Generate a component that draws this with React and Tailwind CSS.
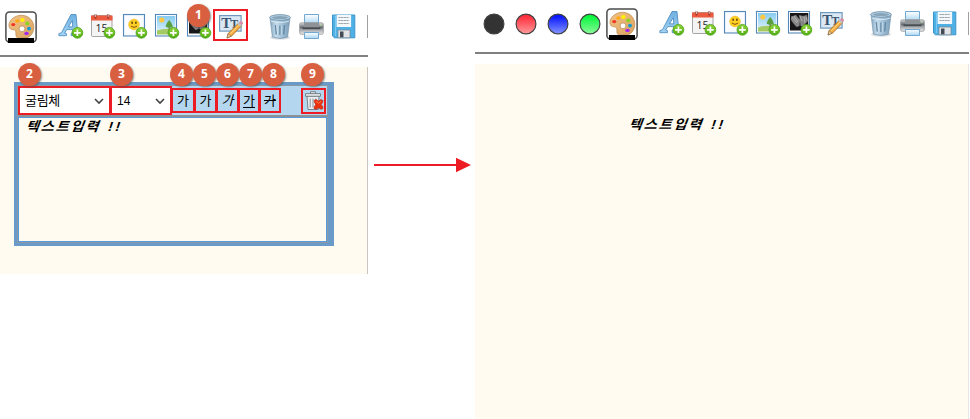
import React from "react";

const KR = "font-['Liberation_Sans','Noto_Sans_CJK_KR',sans-serif]";

function Cell({ children, className = "" }) {
  return (
    <svg viewBox="0 0 32 32" className={`block h-8 w-8 shrink-0 ${className}`} fill="none">
      {children}
    </svg>
  );
}

function Defs() {
  return (
    <svg className="absolute h-0 w-0">
      <defs>
        <linearGradient id="plus" x1="0" y1="0" x2="0" y2="1">
          <stop offset="0" stopColor="#8fd438" /><stop offset="1" stopColor="#4fae10" />
        </linearGradient>
        <linearGradient id="wood" x1="0" y1="0" x2="1" y2="1">
          <stop offset="0" stopColor="#f2c387" /><stop offset="1" stopColor="#d9a360" />
        </linearGradient>
        <linearGradient id="sky" x1="0" y1="0" x2="0" y2="1">
          <stop offset="0" stopColor="#86cbf1" /><stop offset="1" stopColor="#e6f6fc" />
        </linearGradient>
        <linearGradient id="letter" x1="0" y1="0" x2="0" y2="1">
          <stop offset="0" stopColor="#6fb0e0" /><stop offset="1" stopColor="#a5d5f4" />
        </linearGradient>
        <linearGradient id="can" x1="0" y1="0" x2="1" y2="0">
          <stop offset="0" stopColor="#86a8c2" /><stop offset=".3" stopColor="#c5dcec" />
          <stop offset=".65" stopColor="#9bbcd4" /><stop offset="1" stopColor="#7c9db7" />
        </linearGradient>
        <linearGradient id="metal" x1="0" y1="0" x2="0" y2="1">
          <stop offset="0" stopColor="#d7d9dc" /><stop offset=".4" stopColor="#686d72" />
          <stop offset=".6" stopColor="#a4a8ac" /><stop offset="1" stopColor="#e7e8e9" />
        </linearGradient>
        <linearGradient id="sheet" x1="0" y1="0" x2="0" y2="1">
          <stop offset="0" stopColor="#fff" /><stop offset="1" stopColor="#a9d6f4" />
        </linearGradient>
        <linearGradient id="dotred" x1="0" y1="0" x2="0" y2="1">
          <stop offset=".1" stopColor="#ff2c3c" /><stop offset="1" stopColor="#ff9b9b" />
        </linearGradient>
        <linearGradient id="dotblue" x1="0" y1="0" x2="0" y2="1">
          <stop offset=".1" stopColor="#0715ff" /><stop offset="1" stopColor="#8596ff" />
        </linearGradient>
        <linearGradient id="dotgreen" x1="0" y1="0" x2="0" y2="1">
          <stop offset=".1" stopColor="#06f83c" /><stop offset="1" stopColor="#8cf99b" />
        </linearGradient>
      </defs>
    </svg>
  );
}

function Plus() {
  return (
    <g>
      <circle cx="22.4" cy="21.8" r="5.4" fill="url(#plus)" stroke="#4da11b" strokeWidth=".8" />
      <path d="M22.400 18.500v6.600M19.100 21.800h6.600" stroke="#fff" strokeWidth="1.700" />
    </g>
  );
}

function Palette() {
  return (
    <Cell>
      <rect x=".9" y=".9" width="30.2" height="30.2" rx="3.5" fill="#fff" stroke="#4b4b4b" strokeWidth="1.5" />
      <path d="M14 4.500c7.600-1.300 14.500 3.600 14.800 11.200.2 6.200-3.700 11-8.200 11.200-3.500.2-6.200 0-8.600-.4-1.600-.9-.8-4.700-1.400-6.400-.7-1.900-3.800-.8-5.400-2.300C1.500 13.600 6.200 5.800 14 4.500z" fill="url(#wood)" stroke="#bd894c" strokeWidth=".7" />
      <circle cx="17" cy="17.800" r="2.900" fill="#fff" stroke="#bb9362" strokeWidth=".8" />
      <ellipse cx="8.200" cy="13.600" rx="2.100" ry="1.700" fill="#f03824" />
      <ellipse cx="12.300" cy="10" rx="2.200" ry="1.800" fill="#ffa916" />
      <ellipse cx="17.400" cy="9" rx="2.200" ry="1.900" fill="#fff200" />
      <ellipse cx="22.300" cy="12.400" rx="2.100" ry="1.900" fill="#8dd41e" />
      <ellipse cx="24" cy="17.600" rx="2" ry="1.900" fill="#149ad1" />
      <ellipse cx="21.500" cy="22.400" rx="2.200" ry="1.700" fill="#a426f0" />
      <path d="M3 27h26v5H3z" fill="#000" />
    </Cell>
  );
}

function FontIcon() {
  return (
    <Cell>
      <path d="M16 3.500h5l1.700 18 2 .8v2.400h-8.500v-2.400l1.800-.6-.2-3.100h-6l-2.200 3.400 1.800.6v2.100H3.900v-2.100l2.600-.9zM17.400 9.500l-4 6.300h4.300z" fill="url(#letter)" stroke="#4385bd" strokeWidth=".8" />
      <Plus />
    </Cell>
  );
}

function CalendarIcon() {
  return (
    <Cell>
      <rect x="4.500" y="4.500" width="20.500" height="21" rx="1.200" fill="#f4f4f4" stroke="#a5a5a5" />
      <path d="M4 4.500h21.500v5H4z" fill="#ec5a40" />
      <path d="M8.500 3v4.500M21.300 3v4.500" stroke="#9c3428" strokeWidth="1.800" />
      <path d="M8.500 3v3M21.300 3v3" stroke="#ddd" strokeWidth=".8" />
      <text x="8.500" y="20.600" fontSize="10.500" fill="#222" className="font-['Open_Sans',sans-serif]">15</text>
      <Plus />
    </Cell>
  );
}

function Frame({ fill = "#eef6fd" }) {
  return <rect x="4.500" y="3.500" width="21" height="21.500" fill={fill} stroke="#5488b8" strokeWidth="1.100" />;
}

function SmileIcon() {
  return (
    <Cell>
      <Frame />
      <rect x="6" y="5" width="18" height="18.500" fill="#fafcff" />
      <circle cx="15" cy="13.500" r="5.400" fill="#ffcf26" stroke="#e9b41c" strokeWidth=".5" />
      <ellipse cx="13.100" cy="11.800" rx=".8" ry="1.300" fill="#573909" />
      <ellipse cx="16.900" cy="11.800" rx=".8" ry="1.300" fill="#573909" />
      <path d="M11.900 15.100q3.100 2.600 6.200 0" stroke="#805411" strokeWidth="1" />
      <Plus />
    </Cell>
  );
}

function PictureIcon() {
  return (
    <Cell>
      <Frame fill="#fff" />
      <rect x="6" y="5" width="18.300" height="18.500" fill="url(#sky)" />
      <circle cx="10.800" cy="9" r="2.600" fill="#ffc844" />
      <path d="M6 19.500q8-3 18.300-1v5H6z" fill="#a5ca63" />
      <path d="M18.200 13v7" stroke="#7d6539" strokeWidth="1.200" />
      <path d="M18.200 9q-2.500 2.500-3.700 6.500 3.700 2.500 7.400 0-1.200-4-3.700-6.500z" fill="#599f3f" />
      <Plus />
    </Cell>
  );
}

function NightIcon() {
  return (
    <Cell>
      <Frame fill="#fff" />
      <rect x="6" y="5" width="18.300" height="17.500" fill="#171719" />
      <path d="m7 8.500 5-1.500 4 5-.5 6-3 1-3.500-4-2-3zm8-1.500 4 1 4-1 1 6-3 3-1.500 3-3-1-.5-5z" fill="#858585" />
      <path d="m8 9 5 6m-3-7 4 6m2-6 2 5m2-4 1 6m1-6 .6 3" stroke="#d0d0d0" strokeWidth=".6" />
      <Plus />
    </Cell>
  );
}

function TextIcon() {
  return (
    <Cell>
      <rect x="4.600" y="4.600" width="21.500" height="15.500" fill="#dbe8f3" stroke="#6f99bd" strokeWidth="1.200" />
      <text x="6.300" y="17" fontSize="15" fontWeight="700" fill="#38546f" className="font-['Liberation_Serif',serif]">T</text>
      <text x="15.500" y="17" fontSize="11.500" fontWeight="700" fill="#38546f" className="font-['Liberation_Serif',serif]">T</text>
      <path d="m12 27 1.200-4.500L23.600 12l3.100 2.600L16.500 25.200z" fill="#f8ad42" stroke="#9d6a2c" strokeWidth=".8" />
      <path d="m14.800 23.400 10-10" stroke="#ffda83" strokeWidth="1" />
      <path d="m12 27 1.200-4.200 3 2.400z" fill="#efd2a8" stroke="#74512d" strokeWidth=".5" />
      <path d="m22.600 13 1.300-1.400 2.900 2.700-1.300 1.300z" fill="#bec4c8" />
      <path d="m24 11.500 1.200-1.200q1-.5 2 .4t.8 2L26.800 14z" fill="#dc8aa6" />
    </Cell>
  );
}

function TrashIcon() {
  return (
    <Cell>
      <ellipse cx="16" cy="26.500" rx="10" ry="2" fill="#bcc3c8" opacity=".6" />
      <path d="M6 6.500 8.400 26q7.600 3 15.200 0L26 6.500z" fill="url(#can)" stroke="#7796ae" strokeWidth=".7" />
      <ellipse cx="16" cy="6.500" rx="10.400" ry="2.800" fill="#b8d2e4" stroke="#7799b3" />
      <ellipse cx="16" cy="6.600" rx="8.200" ry="1.500" fill="#88a4b9" />
      <path d="M6.800 10q9.200 3.300 18.400 0" stroke="#dceaf3" strokeWidth=".9" />
      <path d="m11.500 14 .8 9.500M16 14.500V24m4.500-10-.8 9.500" stroke="#668aa7" strokeWidth="1.500" />
      <path d="m12.700 14 .8 9.500M17.200 14.500V24" stroke="#d6e7f2" strokeWidth=".7" />
    </Cell>
  );
}

function PrinterIcon() {
  return (
    <Cell>
      <path d="M8.500 3.500h14V13h-14z" fill="url(#sheet)" stroke="#72a9d3" />
      <rect x="3.600" y="11.800" width="23.800" height="11.500" rx="1.700" fill="url(#metal)" stroke="#9a9da0" strokeWidth=".8" />
      <path d="M8 11.500h15v5H8z" fill="#8e9397" />
      <path d="M6.500 17.300h18" stroke="#484d51" strokeWidth="1.800" />
      <path d="M8.500 21.500h14v6h-14z" fill="url(#sheet)" stroke="#72a9d3" />
      <path d="M23.800 14h2" stroke="#bce89c" />
    </Cell>
  );
}

function SaveIcon() {
  return (
    <Cell>
      <path d="M4.500 4h22.300v22.800H6.500l-2-1.800z" fill="#4fb0e6" stroke="#3b94c8" />
      <path d="M5.500 5h2v20" stroke="#8bcff2" strokeWidth=".8" />
      <rect x="8.600" y="4" width="14.500" height="12" fill="#f4f8fa" />
      <path d="M10.500 6.500h10.700M10.500 9.500h10.700M10.500 12.500h10.700" stroke="#8f9aa2" strokeWidth=".9" strokeDasharray="2.200 .4" />
      <path d="M10 19h12v7.800H10z" fill="#e1e5e8" stroke="#72828d" strokeWidth=".7" />
      <path d="M12 20.500h3.500v5.800H12z" fill="#434c54" />
    </Cell>
  );
}

function Badge({ n, className }) {
  return (
    <span className={`absolute z-10 flex h-[23px] w-[23px] items-center justify-center rounded-full bg-[#d95f41] pb-px font-['Open_Sans',sans-serif] text-[12px] font-bold leading-none text-white shadow-[1px_1px_2px_rgba(80,80,80,0.65)] ${className}`}>
      {n}
    </span>
  );
}

function Tools({ marked }) {
  return (
    <>
      <Palette />
      <div className="ml-[18px] flex">
        <FontIcon />
        <CalendarIcon />
        <SmileIcon />
        <PictureIcon />
        <div className="relative">
          <NightIcon />
          {marked && <Badge n={1} className="left-1 -top-[7px]" />}
        </div>
        <div className={marked ? "h-7 w-[31px] outline-2 outline-[#ed1c24]" : "w-8"}>
          <TextIcon />
        </div>
      </div>
      <div className={marked ? "ml-[18px] flex" : "ml-[17px] flex"}>
        <TrashIcon />
        <PrinterIcon />
        <SaveIcon />
      </div>
      <div className="ml-[7px] mt-1 h-[23px] w-px shrink-0 bg-[#a0a0a0]" />
    </>
  );
}

function ColorDot({ fill }) {
  return (
    <Cell>
      <circle cx="16" cy="16" r="9.900" fill={fill} stroke="#414141" strokeWidth="1.200" />
    </Cell>
  );
}

function Select({ n, label, className, textClass, badge }) {
  return (
    <div className={`relative flex h-[29px] items-center justify-between border-2 border-[#ed1c24] bg-white pl-[5px] pr-[5px] text-black ${className}`}>
      <span className={`${KR} leading-none ${textClass}`}>{label}</span>
      <svg viewBox="0 0 10 8" className="h-2 w-2.5" fill="none">
        <path d="m1 2 4 4 4-4" stroke="#444" strokeWidth="1.600" />
      </svg>
      <Badge n={n} className={badge} />
    </div>
  );
}

function StyleButton({ n, className, textClass, badge }) {
  return (
    <div className={`relative mt-0.5 flex h-[25px] items-center justify-center border-2 border-[#ed1c24] ${className}`}>
      <span className={`${KR} text-[13px] leading-none text-black ${textClass}`}>가</span>
      <Badge n={n} className={badge} />
    </div>
  );
}

function SampleText() {
  return (
    <div className={`${KR} -ml-px flex origin-left scale-x-[1.09] -skew-x-6 gap-[7px] whitespace-pre text-[13px] font-bold italic leading-4 tracking-[1.700px] text-black`}>
      <span>텍스트입력</span>
      <span className="tracking-[2.500px]">!!</span>
    </div>
  );
}

function TextEditor() {
  return (
    <div className="h-[164px] w-[320px] bg-[#6a9ac7] pl-[3px] pt-[3px]">
      <div className="h-[158px] w-[311px] border border-[#8b98a5]">
        <div className="flex h-[29px] bg-[#b4d7ef]">
          <Select n={2} label="굴림체" textClass="text-[13px] tracking-[-0.3px]" className="w-[93px]" badge="left-[-2px] top-[-25px]" />
          <Select n={3} label="14" textClass="text-[12px]" className="-ml-px w-[62px]" badge="left-[-2px] top-[-25px]" />
          <StyleButton n={4} className="-ml-px w-[24px]" badge="left-[-3px] top-[-27px]" />
          <StyleButton n={5} className="-ml-px w-[23px]" badge="left-[-3px] top-[-27px]" />
          <StyleButton n={6} className="-ml-px w-[23px]" textClass="italic" badge="left-[-2px] top-[-27px]" />
          <StyleButton n={7} className="-ml-px w-[22px]" textClass="underline underline-offset-2" badge="left-[-1px] top-[-27px]" />
          <StyleButton n={8} className="-ml-px w-[22px]" textClass="line-through" badge="left-[1px] top-[-27px]" />
          <div className="relative ml-auto mr-px mt-0.5 h-[26px] w-[25px] border-2 border-[#ed1c24]">
            <svg viewBox="0 0 21 22" className="h-[22px] w-[21px]" fill="none">
              <path d="M4 6h12l-.7 13.500H5z" fill="#eceff1" stroke="#707980" strokeWidth=".9" />
              <path d="M2.500 3.600h15v2.700h-15zM7.500 3.500V1.700h5v1.800" fill="#e2e6e8" stroke="#707980" strokeWidth=".9" />
              <path d="M7.200 8.500v9M10 8.500v9M12.700 8.500v9" stroke="#929ba1" strokeWidth="1.100" />
              <path d="m11 10.500 2.300-1 2.200 1.700 2.200-1.700 2.300 1-.6 2.300-1.300 1.700 1.500 1.800.4 2.200-2.200.8-2.300-1.600-2.300 1.600-2.200-.8.4-2.200 1.500-1.800-1.300-1.700z" fill="#ee3210" stroke="#b5210c" strokeWidth=".6" />
              <path d="m13 11.300 2.500 2 2.500-2" stroke="#ff8a5c" strokeWidth=".8" />
            </svg>
            <Badge n={9} className="left-[-2px] top-[-27px]" />
          </div>
        </div>
        <div className="h-0.5 bg-[#8d9297]" />
        <div className="h-[125px] border border-[#5799dc] bg-[#fffbf0] pl-2 pt-[1px]">
          <SampleText />
        </div>
      </div>
    </div>
  );
}

export default function App() {
  return (
    <main className="flex h-[419px] w-[970px] overflow-hidden bg-white">
      <Defs />
      <section className="h-[274px] w-[368px] shrink-0">
        <header className="flex h-[57px] border-b-2 border-[#808080] pl-[5px] pt-[11px]">
          <Tools marked />
        </header>
        <div className="mt-[10px] h-[207px] border-r border-[#c9c6c2] bg-[#fffbf0] pl-[14px] pt-[15px]">
          <TextEditor />
        </div>
      </section>
      <div className="w-[107px] shrink-0 pl-[6px] pt-[157px]">
        <svg viewBox="0 0 98 16" className="h-4 w-[98px]">
          <path d="M0 8h84" stroke="#ed1c24" strokeWidth="1.800" />
          <path d="M82 .8 97 8l-15 7.200z" fill="#ed1c24" />
        </svg>
      </div>
      <section className="h-[419px] w-[494px] shrink-0">
        <header className="flex h-[54px] border-b-2 border-[#808080] pl-[3px] pt-[8px]">
          <div className="flex">
            <ColorDot fill="#333" />
            <ColorDot fill="url(#dotred)" />
            <ColorDot fill="url(#dotblue)" />
            <ColorDot fill="url(#dotgreen)" />
          </div>
          <Tools />
        </header>
        <div className="mt-[10px] h-[355px] border-r border-[#e8e6e2] bg-[#fffbf0] pl-[155px] pt-[53px]">
          <SampleText />
        </div>
      </section>
    </main>
  );
}
